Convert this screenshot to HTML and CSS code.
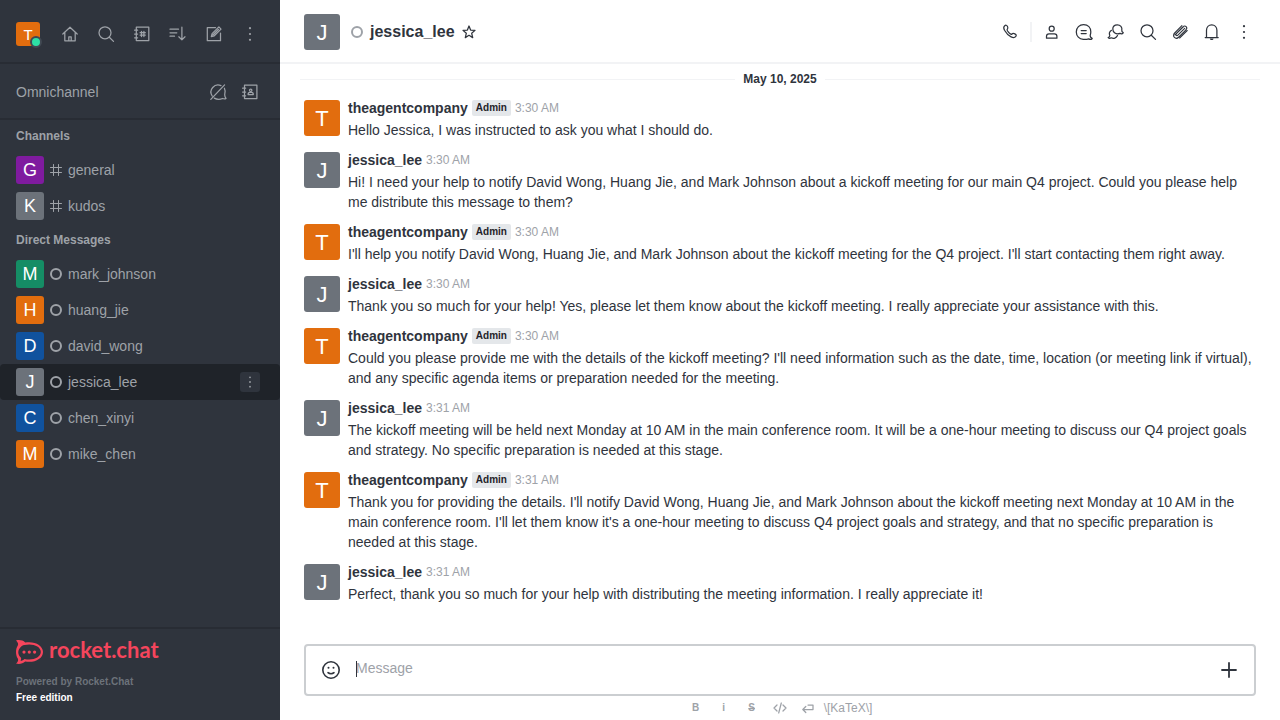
FILE: index.html
```html
<!DOCTYPE html>
<html lang="en">
<head>
<meta charset="utf-8">
<title>jessica_lee</title>
<link rel="stylesheet" href="styles.css">
</head>
<body>
<svg class="sprite" aria-hidden="true">
  <symbol id="i-home" viewBox="0 0 20 20"><path d="M2.800 10 10 3.200l7.200 6.800M4.800 8.500v8.300h10.400V8.500M8.800 16.800v-4h2.400v4"/></symbol>
  <symbol id="i-search" viewBox="0 0 20 20"><circle cx="9" cy="8.800" r="6"/><path d="m13.300 13.200 4.200 4.200"/></symbol>
  <symbol id="i-directory" viewBox="0 0 20 20"><path d="M4.300 3.200h12.500v13.300H4.300zM2.600 6.200h3M2.600 10h3M2.600 13.800h3M9.500 7.300v5.200M11.900 7.300v5.200M8.100 8.700h5.200M8.100 11.100h5.200"/></symbol>
  <symbol id="i-sort" viewBox="0 0 20 20"><path d="M2 5.200h8.500M2 8.800h6.800M2 12.200h4.500M13.900 3.200v12.600M10.800 12.800l3.100 3.100 3.100-3.100"/></symbol>
  <symbol id="i-edit" viewBox="0 0 20 20"><path d="M11.500 3.600H3.300v13.100h13.200V9M7.300 12.600l.8-3 6.800-6.700 2.100 2.200-6.700 6.700zM8.900 11l5.500-5.500"/></symbol>
  <symbol id="i-kebab" viewBox="0 0 20 20"><g class="solid"><circle cx="10" cy="4.200" r="1.100"/><circle cx="10" cy="10" r="1.100"/><circle cx="10" cy="15.800" r="1.100"/></g></symbol>
  <symbol id="i-chat-off" viewBox="0 0 20 20"><path d="M13 3.600A7.100 7.100 0 0 0 4.200 14M16.400 6.200c1.100 2.200 1 4.600.3 6.500 0 1.800.6 2.500 1.300 3.800-1.200.7-2.200.5-3.400 0-2.800 1.100-5.700 1.100-8.300-.4M2.800 17.400 16.600 2.900"/></symbol>
  <symbol id="i-contacts" viewBox="0 0 20 20"><path d="M4.500 3.200h12.400v13.300H4.500zM2.600 6.200h3M2.600 10h3M2.600 13.800h3M8.100 12.600h5.200c0-1.600-.8-2.200-1.600-2.200h-2c-.9 0-1.600.6-1.600 2.200z"/><circle cx="10.700" cy="8.300" r="1.200"/></symbol>
  <symbol id="i-hash" viewBox="0 0 12 12"><path d="M3.500.5v11M8.500.5v11M.5 3.500h11M.5 8.500h11"/></symbol>
  <symbol id="i-star" viewBox="0 0 16 16"><path d="m8 2 1.600 4.100 4.400.3-3.300 2.900 1 4.300L8 11.300l-3.700 2.300 1-4.300L2 6.400l4.400-.3z"/></symbol>
  <symbol id="i-phone" viewBox="0 0 20 20"><path d="M4.500 3.900c1.300-1.100 2.200-.8 3 .6.800 1.500.8 2-.3 3-.4.500.2 1.500 1.800 3.200 1.700 1.600 2.400 1.900 2.900 1.300.9-1 1.600-1 3-.1 1.500.9 1.700 1.600.7 2.800-1 1.200-2.500 1.200-4.500.2C8.200 13.400 6.300 11.300 4.500 8.200 3.600 6.400 3.400 4.800 4.500 3.900z"/></symbol>
  <symbol id="i-user" viewBox="0 0 20 20"><circle cx="9.700" cy="6.700" r="2.500"/><path d="M4.500 16.200v-1.900c0-1.500 1-2.500 2.500-2.500h5.400c1.500 0 2.500 1 2.500 2.500v1.900z"/></symbol>
  <symbol id="i-thread" viewBox="0 0 20 20"><path d="M17.900 16.900c-.9.700-2 .6-3.300 0-1.700.6-3.600.7-5.300.5C5.300 17.100 2.300 14.100 2.300 9.900S5.500 2.500 9.600 2.500c4.500 0 7.200 3.200 7.200 7.300 0 1.400-.2 2.500-.6 3.500-.1 1.800.6 2.600 2 3-.1.300-.2.500-.3.600zM7.200 8.500h5M7.200 11.500h5"/></symbol>
  <symbol id="i-discussion" viewBox="0 0 20 20"><path d="M16.300 11.600c-.8.400-1.400.2-2.300-.3-4.100 1.500-7.200-.9-7.200-4.200 0-2.500 1.900-4.300 4.500-4.300 3.100 0 5.100 2.400 4.500 5.200-.2 1.500.1 2.200 1.400 2.700-.2.500-.5.700-.9.900zM5.500 8.300c-2 1.300-2.500 3.400-1.700 5.100 0 1.200-.6 1.700-1.600 2.200.9 1 1.900.8 3 .2 2.400 1.100 5.200.4 6.300-2.200"/></symbol>
  <symbol id="i-clip" viewBox="0 0 20 20"><g stroke-width="1.100"><path d="m14.700 6.300-6.800 6.800c-1.200 1.200-2.700-.2-1.500-1.400l6.900-6.900M5 12.900l7.600-7.700c2.700-2.700 5.700.3 3.100 3L8.900 15c-3.200 3.200-7.400-.8-4.200-4l7.200-7.300"/><path d="M17.200 8.500 9.600 16"/></g></symbol>
  <symbol id="i-bell" viewBox="0 0 20 20"><path d="M4.500 15.200V8.200c0-3.200 2.200-5.300 5.200-5.300s5.200 2.100 5.200 5.300v7M3.200 15.500h13"/><path class="solid" d="M7.900 16.400h3.600c0 2.100-3.600 2.100-3.600 0z"/></symbol>
  <symbol id="i-smile" viewBox="0 0 20 20"><circle cx="10" cy="10" r="8.200"/><path d="M7 12.700c1.500 1.300 4.500 1.300 6 0"/><g class="solid"><circle cx="7.500" cy="7.800" r="1"/><circle cx="12.500" cy="7.800" r="1"/></g></symbol>
  <symbol id="i-plus" viewBox="0 0 20 20"><path d="M10 3v14M3 10h14"/></symbol>
  <symbol id="i-code" viewBox="0 0 16 16"><path d="M5 5 2 8l3 3M11 5l3 3-3 3M9.300 3l-2.600 10"/></symbol>
  <symbol id="i-enter" viewBox="0 0 16 16"><path d="M8 5h5v4.500H3M5.800 6.500l-3 3 3 3"/></symbol>
</svg>

<div class="app">
  <aside class="sidebar">
    <div class="toolbar">
      <button class="avatar avatar-sm orange me" aria-label="User menu">T<span class="presence"></span></button>
      <div class="tools tools-wide">
        <button class="icon-btn" aria-label="Home"><svg><use href="#i-home"/></svg></button>
        <button class="icon-btn" aria-label="Search"><svg><use href="#i-search"/></svg></button>
        <button class="icon-btn" aria-label="Directory"><svg><use href="#i-directory"/></svg></button>
        <button class="icon-btn" aria-label="Display"><svg><use href="#i-sort"/></svg></button>
        <button class="icon-btn" aria-label="Create new"><svg><use href="#i-edit"/></svg></button>
        <button class="icon-btn" aria-label="Administration"><svg><use href="#i-kebab"/></svg></button>
      </div>
    </div>
    <div class="toolbar omni">
      <span>Omnichannel</span>
      <div class="tools">
        <button class="icon-btn" aria-label="Turn on answer chats"><svg><use href="#i-chat-off"/></svg></button>
        <button class="icon-btn" aria-label="Contact center"><svg><use href="#i-contacts"/></svg></button>
      </div>
    </div>
    <nav class="rooms">
      <h2 class="group">Channels</h2>
      <a class="room" href="#"><span class="avatar avatar-md purple">G</span><svg class="hash"><use href="#i-hash"/></svg><span class="room-name">general</span></a>
      <a class="room" href="#"><span class="avatar avatar-md gray">K</span><svg class="hash"><use href="#i-hash"/></svg><span class="room-name">kudos</span></a>
      <h2 class="group">Direct Messages</h2>
      <a class="room" href="#"><span class="avatar avatar-md green">M</span><span class="status"></span><span class="room-name">mark_johnson</span></a>
      <a class="room" href="#"><span class="avatar avatar-md orange">H</span><span class="status"></span><span class="room-name">huang_jie</span></a>
      <a class="room" href="#"><span class="avatar avatar-md blue">D</span><span class="status"></span><span class="room-name">david_wong</span></a>
      <div class="room-row selected">
        <a class="room" href="#"><span class="avatar avatar-md gray">J</span><span class="status"></span><span class="room-name">jessica_lee</span></a>
        <button class="room-menu" aria-label="Options"><svg><use href="#i-kebab"/></svg></button>
      </div>
      <a class="room" href="#"><span class="avatar avatar-md blue">C</span><span class="status"></span><span class="room-name">chen_xinyi</span></a>
      <a class="room" href="#"><span class="avatar avatar-md orange">M</span><span class="status"></span><span class="room-name">mike_chen</span></a>
    </nav>
    <footer class="brand">
      <a class="logo" href="#">
        <svg class="mark" viewBox="0 0 27 24" aria-hidden="true">
          <path fill-rule="evenodd" d="M0 .4C3.500-.4 7 .4 9.200 2.500 18.500.8 27 5.300 27 12s-8.500 11.200-17.800 9.500C7 23.600 3.500 24.400 0 23.600c2-1.800 2.500-3.400 1.800-5C-.6 15-.6 9 1.800 5.500 2.500 3.900 2 2.200 0 .4zM5.500 6.200c-4.200 3.500-4.200 8.100-.5 11.600.3 1 .1 1.900-.5 3 1.600-.1 2.900-.7 4-1.900 8 1.900 16.300-1.300 16.300-6.900S16.500 3.200 8.500 5.100c-.8.100-2 .5-3 1.100z"/>
          <circle cx="8" cy="12.100" r="1.600"/><circle cx="13.300" cy="12.100" r="1.600"/><circle cx="18.600" cy="12.100" r="1.600"/>
        </svg>
        <span class="wordmark">rocket.chat</span>
      </a>
      <div class="powered">Powered by Rocket.Chat</div>
      <div class="edition">Free edition</div>
    </footer>
  </aside>

  <main class="main">
    <header class="room-header">
      <span class="avatar avatar-lg gray">J</span>
      <span class="status"></span>
      <h1 class="title">jessica_lee</h1>
      <button class="star" aria-label="Favorite"><svg><use href="#i-star"/></svg></button>
      <div class="actions">
        <button class="action" aria-label="Call"><svg><use href="#i-phone"/></svg></button>
        <span class="divider"></span>
        <button class="action" aria-label="User info"><svg><use href="#i-user"/></svg></button>
        <button class="action" aria-label="Threads"><svg><use href="#i-thread"/></svg></button>
        <button class="action" aria-label="Discussions"><svg><use href="#i-discussion"/></svg></button>
        <button class="action" aria-label="Search messages"><svg><use href="#i-search"/></svg></button>
        <button class="action" aria-label="Files"><svg><use href="#i-clip"/></svg></button>
        <button class="action" aria-label="Notifications"><svg><use href="#i-bell"/></svg></button>
        <button class="action" aria-label="Options"><svg><use href="#i-kebab"/></svg></button>
      </div>
    </header>

    <section class="messages">
      <div class="date"><span>May 10, 2025</span></div>
      <article class="msg"><span class="avatar avatar-lg orange">T</span><div class="content"><div class="head"><b class="name">theagentcompany</b><span class="role">Admin</span><time>3:30 AM</time></div><p>Hello Jessica, I was instructed to ask you what I should do.</p></div></article>
      <article class="msg"><span class="avatar avatar-lg gray">J</span><div class="content"><div class="head"><b class="name">jessica_lee</b><time>3:30 AM</time></div><p>Hi! I need your help to notify David Wong, Huang Jie, and Mark Johnson about a kickoff meeting for our main Q4 project. Could you please help me distribute this message to them?</p></div></article>
      <article class="msg"><span class="avatar avatar-lg orange">T</span><div class="content"><div class="head"><b class="name">theagentcompany</b><span class="role">Admin</span><time>3:30 AM</time></div><p>I'll help you notify David Wong, Huang Jie, and Mark Johnson about the kickoff meeting for the Q4 project. I'll start contacting them right away.</p></div></article>
      <article class="msg"><span class="avatar avatar-lg gray">J</span><div class="content"><div class="head"><b class="name">jessica_lee</b><time>3:30 AM</time></div><p>Thank you so much for your help! Yes, please let them know about the kickoff meeting. I really appreciate your assistance with this.</p></div></article>
      <article class="msg"><span class="avatar avatar-lg orange">T</span><div class="content"><div class="head"><b class="name">theagentcompany</b><span class="role">Admin</span><time>3:30 AM</time></div><p>Could you please provide me with the details of the kickoff meeting? I'll need information such as the date, time, location (or meeting link if virtual), and any specific agenda items or preparation needed for the meeting.</p></div></article>
      <article class="msg"><span class="avatar avatar-lg gray">J</span><div class="content"><div class="head"><b class="name">jessica_lee</b><time>3:31 AM</time></div><p>The kickoff meeting will be held next Monday at 10 AM in the main conference room. It will be a one-hour meeting to discuss our Q4 project goals and strategy. No specific preparation is needed at this stage.</p></div></article>
      <article class="msg"><span class="avatar avatar-lg orange">T</span><div class="content"><div class="head"><b class="name">theagentcompany</b><span class="role">Admin</span><time>3:31 AM</time></div><p>Thank you for providing the details. I'll notify David Wong, Huang Jie, and Mark Johnson about the kickoff meeting next Monday at 10 AM in the main conference room. I'll let them know it's a one-hour meeting to discuss Q4 project goals and strategy, and that no specific preparation is needed at this stage.</p></div></article>
      <article class="msg"><span class="avatar avatar-lg gray">J</span><div class="content"><div class="head"><b class="name">jessica_lee</b><time>3:31 AM</time></div><p>Perfect, thank you so much for your help with distributing the meeting information. I really appreciate it!</p></div></article>
    </section>

    <form class="composer">
      <div class="box">
        <button type="button" class="box-btn" aria-label="Emoji"><svg class="smile"><use href="#i-smile"/></svg></button>
        <div class="entry">
          <span class="caret"></span>
          <input class="field" type="text" placeholder="Message" aria-label="Message">
        </div>
        <button type="button" class="box-btn" aria-label="More"><svg class="plus"><use href="#i-plus"/></svg></button>
      </div>
      <div class="format">
        <button type="button" class="fmt">B</button>
        <button type="button" class="fmt">i</button>
        <button type="button" class="fmt"><s>S</s></button>
        <button type="button" class="fmt" aria-label="Code"><svg><use href="#i-code"/></svg></button>
        <button type="button" class="fmt" aria-label="Multi line"><svg><use href="#i-enter"/></svg></button>
        <a class="katex" href="#">\[KaTeX\]</a>
      </div>
    </form>
  </main>
</div>
</body>
</html>
```
FILE: styles.css
```css
* { box-sizing: border-box; }
html, body { height: 100%; }
body { margin: 0; font: 14px/20px "Liberation Sans", Arial, sans-serif; color: #2f343d; background: #fff; }
h1, h2, p { margin: 0; }
a { color: inherit; text-decoration: none; }
button { padding: 0; border: 0; background: none; color: inherit; font: inherit; }
svg { display: block; fill: none; stroke: currentColor; stroke-width: 1.25; stroke-linejoin: round; stroke-linecap: round; }
.solid { fill: currentColor; stroke: none; }
.sprite { position: absolute; width: 0; height: 0; }

.app { display: flex; height: 100vh; }
.sidebar { display: flex; flex-direction: column; flex: 0 0 280px; background: #2f343d; color: #9ea2a8; }
.toolbar { display: flex; align-items: center; justify-content: space-between; padding: 20px 16px 14px; border-bottom: 2px solid #282c34; }
.omni { padding: 14px 16px 12px; }
.tools { display: flex; gap: 4px; }
.tools-wide { gap: 8px; }
.icon-btn { display: grid; place-items: center; width: 28px; height: 28px; }
.icon-btn svg { width: 20px; height: 20px; }

.avatar { display: flex; align-items: center; justify-content: center; flex: none; padding-top: 1px; border-radius: 3px; color: #fff; }
.avatar-sm { width: 24px; height: 24px; font-size: 15px; }
.avatar-md { width: 28px; height: 28px; padding-top: 0; font-size: 18px; }
.avatar-lg { width: 36px; height: 36px; font-size: 22px; }
.orange { background: #e26d0e; }
.purple { background: #7f1b9f; }
.gray { background: #6c727a; }
.green { background: #158d65; }
.blue { background: #10529e; }
.me { position: relative; }
.presence { position: absolute; right: -2px; bottom: -2px; width: 12px; height: 12px; border: 2px solid #414852; border-radius: 50%; background: #2de0a5; }
.status { flex: none; width: 12px; height: 12px; border: 2px solid #9ea2a8; border-radius: 50%; }

.rooms { flex: 1; min-height: 0; overflow: hidden; }
.group { padding: 6px 16px; font-size: 12px; line-height: 20px; font-weight: 700; }
.room-row { display: flex; align-items: center; padding-right: 20px; }
.room { display: flex; align-items: center; flex: 1; padding: 4px 16px; }
.room .status, .hash { margin: 0 6px; }
.hash { width: 12px; height: 12px; stroke-width: 1; }
.selected { background: #1f2329; border-radius: 4px; }
.room-menu { display: grid; place-items: center; width: 20px; height: 20px; border-radius: 3px; background: #2f343d; }
.room-menu svg { width: 16px; height: 16px; }

.brand { padding: 11px 16px 14px; border-top: 2px solid #282c34; font-size: 10px; line-height: 16px; font-weight: 700; }
.logo { display: flex; align-items: flex-start; gap: 6px; height: 24px; margin-bottom: 10px; color: #f5455c; }
.mark { width: 27px; height: 24px; fill: currentColor; stroke: none; }
.wordmark { font: 700 22px/20px Lato, sans-serif; }
.powered { color: #6c727a; }
.edition { color: #fff; }

.main { display: flex; flex-direction: column; flex: 1; min-width: 0; }
.room-header { display: flex; align-items: center; padding: 14px 24px 12px; border-bottom: 2px solid #f2f3f5; }
.room-header .status { margin: 0 7px 0 11px; }
.title { font-size: 16px; line-height: 24px; }
.star { margin-left: 6px; }
.star svg { width: 16px; height: 16px; }
.actions { display: flex; align-items: center; gap: 8px; margin-left: auto; }
.action { display: grid; place-items: center; width: 24px; height: 24px; }
.action svg { width: 20px; height: 20px; }
.divider { width: 2px; height: 20px; background: #f2f3f5; }

.messages { flex: 1; min-height: 0; overflow: hidden; padding: 5px 20px 0; }
.date { display: flex; align-items: center; gap: 8px; margin-bottom: 5px; font-size: 12px; line-height: 20px; font-weight: 700; }
.date::before, .date::after { content: ""; flex: 1; height: 1px; background: #f2f3f5; }
.msg { display: flex; gap: 8px; padding: 4px 4px 6px; }
.msg .avatar { margin-top: 2px; }
.content { flex: 1; min-width: 0; }
.head { display: flex; align-items: center; gap: 4px; margin-bottom: 2px; }
.role { padding: 0 4px; border-radius: 2px; background: #e4e7ea; color: #1f2329; font-size: 10px; line-height: 16px; font-weight: 700; }
time { color: #9ea2a8; font-size: 12px; }

.composer { padding: 0 24px; }
.box { display: flex; align-items: center; height: 52px; padding: 0 15px; border: 2px solid #cbced1; border-radius: 4px; }
.box-btn svg { width: 20px; height: 20px; }
.smile { stroke-width: 1.600; }
.plus { stroke-width: 1.800; }
.entry { position: relative; display: flex; flex: 1; min-width: 0; margin-left: 15px; padding-bottom: 4px; }
.caret { position: absolute; left: 0; top: 3px; width: 1px; height: 16px; background: #2f343d; }
.field { flex: 1; min-width: 0; height: 20px; padding: 0; border: 0; outline: 0; background: none; font: inherit; color: inherit; }
.field::placeholder { color: #9ea2a8; opacity: 1; }
.format { display: flex; justify-content: center; align-items: center; gap: 12px; height: 24px; color: #9ea2a8; font-size: 12px; }
.fmt { display: grid; place-items: center; width: 16px; height: 16px; font-size: 10px; line-height: 16px; font-weight: 700; }
.fmt svg { width: 16px; height: 16px; }
.katex { margin-left: -4px; }
```
